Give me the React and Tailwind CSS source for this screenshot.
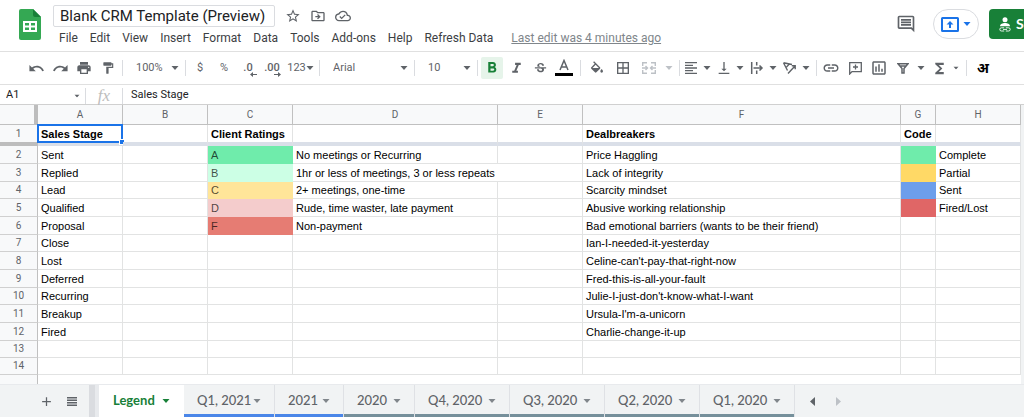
import clsx from "clsx";
import {
  MdAdd,
  MdBorderAll,
  MdFormatAlignLeft,
  MdFormatBold,
  MdFormatItalic,
  MdFormatPaint,
  MdFunctions,
  MdLink,
  MdOutlineCloudDone,
  MdOutlineComment,
  MdOutlineDriveFileMove,
  MdOutlineInsertChart,
  MdPrint,
  MdRedo,
  MdStarBorder,
  MdStrikethroughS,
  MdUndo,
  MdVerticalAlignBottom,
} from "react-icons/md";

const MENUS = ["File", "Edit", "View", "Insert", "Format", "Data", "Tools", "Add-ons", "Help", "Refresh Data"];

const COLUMNS = [
  { id: "A", width: "w-[85px]" },
  { id: "B", width: "w-[85px]" },
  { id: "C", width: "w-[85px]" },
  { id: "D", width: "w-[205px]" },
  { id: "E", width: "w-[85px]" },
  { id: "F", width: "" },
  { id: "G", width: "w-[35px]" },
  { id: "H", width: "w-[85px]" },
];

const HEADINGS = { A: "Sales Stage", C: "Client Ratings", F: "Dealbreakers", G: "Code" };

const ROWS = [
  { A: "Sent", C: "A", D: "No meetings or Recurring", F: "Price Haggling", H: "Complete" },
  { A: "Replied", C: "B", D: "1hr or less of meetings, 3 or less repeats", F: "Lack of integrity", H: "Partial" },
  { A: "Lead", C: "C", D: "2+ meetings, one-time", F: "Scarcity mindset", H: "Sent" },
  { A: "Qualified", C: "D", D: "Rude, time waster, late payment", F: "Abusive working relationship", H: "Fired/Lost" },
  { A: "Proposal", C: "F", D: "Non-payment", F: "Bad emotional barriers (wants to be their friend)" },
  { A: "Close", F: "Ian-I-needed-it-yesterday" },
  { A: "Lost", F: "Celine-can't-pay-that-right-now" },
  { A: "Deferred", F: "Fred-this-is-all-your-fault" },
  { A: "Recurring", F: "Julie-I-just-don't-know-what-I-want" },
  { A: "Breakup", F: "Ursula-I'm-a-unicorn" },
  { A: "Fired", F: "Charlie-change-it-up" },
  {},
  {},
];

const RATING_FILLS = ["bg-[#6fecab]", "bg-[#ccffe5]", "bg-[#ffe599]", "bg-[#f4cccc]", "bg-[#e67c73]"];
const CODE_FILLS = ["bg-[#6fecab]", "bg-[#ffd966]", "bg-[#6d9eeb]", "bg-[#e06666]"];

const TABS = [
  { name: "Q1, 2021", bar: "border-[#4a86e8]", width: "w-[91px]" },
  { name: "2021", bar: "border-[#4a86e8]", width: "w-[69px]" },
  { name: "2020", bar: "border-[#76909b]", width: "w-[71px]" },
  { name: "Q4, 2020", bar: "border-[#76909b]", width: "w-[95px]" },
  { name: "Q3, 2020", bar: "border-[#76909b]", width: "w-[95px]" },
  { name: "Q2, 2020", bar: "border-[#76909b]", width: "w-[95px]" },
  { name: "Q1, 2020", bar: "border-[#76909b]", width: "w-[95px]" },
];

function Caret({ className }) {
  return (
    <svg viewBox="0 0 8 4" className={clsx("h-1 w-2 shrink-0", className)} fill="currentColor" aria-hidden="true">
      <path d="M0.5 0h7L4 4z" />
    </svg>
  );
}

function Group({ className, children }) {
  return <div className={clsx("flex h-4 shrink-0 items-center border-r border-[#dadce0]", className)}>{children}</div>;
}

function Tool({ label, className = "w-6", children }) {
  return (
    <button aria-label={label} className={clsx("flex h-6 shrink-0 items-center justify-center", className)}>
      {children}
    </button>
  );
}

function MenuTool({ label, children }) {
  return (
    <Tool label={label} className="w-[33px] gap-1">
      {children}
      <Caret />
    </Tool>
  );
}

function ToolSelect({ label, value, className }) {
  return (
    <div className={clsx("relative flex items-center", className)}>
      <select
        aria-label={label}
        defaultValue={value}
        className="w-full appearance-none bg-transparent pl-[11px] text-[11px] leading-4 outline-none"
      >
        <option>{value}</option>
      </select>
      <Caret className="pointer-events-none absolute right-1" />
    </div>
  );
}

function SheetsLogo() {
  return (
    <svg viewBox="0 0 22 31" className="h-[31px] w-[22px] shrink-0" aria-hidden="true">
      <path d="M2 0h12l8 8v21a2 2 0 0 1-2 2H2a2 2 0 0 1-2-2V2a2 2 0 0 1 2-2z" fill="#34a853" />
      <path d="M14 0l8 8h-6a2 2 0 0 1-2-2z" fill="#188038" />
      <path d="M4 12h14v11H4zM6 14v2.600h4V14zM12 14v2.600h4V14zM6 18.500V21h4v-2.500zM12 18.500V21h4v-2.500z" fill="#fff" fillRule="evenodd" />
    </svg>
  );
}

function Header() {
  return (
    <header className="flex h-[52px] items-start overflow-hidden border-b border-[#e0e0e0] pl-[19px]">
      <div className="pt-[9px]">
        <SheetsLogo />
      </div>
      <div className="ml-3 shrink-0 pt-[5px]">
        <div className="flex items-center text-[#5f6368]">
          <input
            aria-label="Document name"
            defaultValue="Blank CRM Template (Preview)"
            className="h-[22px] w-[222px] rounded-xs border border-[#dadce0] px-[6px] text-[15px] leading-5 text-[#202124] outline-none"
          />
          <button aria-label="Star" className="ml-[10px]">
            <MdStarBorder size={16} />
          </button>
          <button aria-label="Move" className="ml-[9px]">
            <MdOutlineDriveFileMove size={16} />
          </button>
          <button aria-label="Saved to Drive" className="ml-[9px]">
            <MdOutlineCloudDone size={16} />
          </button>
        </div>
        <nav className="mt-[3px] flex items-center gap-3 pl-[6px] text-xs leading-4 text-[#3c4043]">
          {MENUS.map((name) => (
            <button key={name}>{name}</button>
          ))}
          <a href="#history" className="ml-[6px] text-[#80868b] underline">
            Last edit was 4 minutes ago
          </a>
        </nav>
      </div>
      <div className="-mr-[37px] ml-auto flex shrink-0 items-center pt-[9px]">
        <button aria-label="Open comment history" className="text-[#5f6368]">
          <MdOutlineComment size={20} />
        </button>
        <button
          aria-label="Present to a meeting"
          className="ml-[17px] flex h-[30px] w-[46px] items-center justify-center gap-1 rounded-full border border-[#dadce0] text-[#1a73e8]"
        >
          <svg viewBox="0 0 18 15" className="h-[15px] w-[18px]" aria-hidden="true">
            <rect x="1" y="1" width="16" height="13" rx="0.500" fill="none" stroke="currentColor" strokeWidth="2" />
            <path d="M9 4l3.500 3.500H10V11H8V7.500H5.500z" fill="currentColor" />
          </svg>
          <Caret />
        </button>
        <button className="ml-[10px] flex h-[30px] w-[72px] items-center gap-[5px] rounded-sm bg-[#188038] pl-[10px] font-['Lato',sans-serif] text-sm font-bold text-white">
          <svg viewBox="0 0 12 15" className="h-[15px] w-3 shrink-0" aria-hidden="true">
            <circle cx="6" cy="2.700" r="2.500" fill="#fff" />
            <path d="M1 9.300c0-2.200 2.600-3.300 5-3.300s5 1.100 5 3.300z" fill="#fff" />
            <path d="M5.200 10.800H2.400a1.600 1.600 0 0 0 0 3.200h2.800M6.800 10.800h2.800a1.600 1.600 0 0 1 0 3.200H6.800M4 12.400h4" fill="none" stroke="#fff" strokeWidth="0.900" />
          </svg>
          Share
        </button>
      </div>
    </header>
  );
}

function Toolbar() {
  return (
    <div className="flex h-[33px] items-center border-b border-[#e0e0e0] pl-6 text-[11px] text-[#5f6368]">
      <Group className="pr-0.5">
        <Tool label="Undo"><MdUndo size={17} /></Tool>
        <Tool label="Redo"><MdRedo size={17} /></Tool>
        <Tool label="Print"><MdPrint size={16} /></Tool>
        <Tool label="Paint format"><MdFormatPaint size={14} /></Tool>
      </Group>
      <Group className="px-0.5">
        <ToolSelect label="Zoom" value="100%" className="w-[58px]" />
      </Group>
      <Group className="px-0.5">
        <Tool label="Format as currency">$</Tool>
        <Tool label="Format as percent">%</Tool>
        <Tool label="Decrease decimal places">
          <span className="relative font-medium">
            .0
            <svg viewBox="0 0 7 5" className="absolute -right-1 -bottom-px h-[5px] w-[7px]" aria-hidden="true">
              <path d="M0 2.500L3 0v2h4v1H3v2z" fill="currentColor" />
            </svg>
          </span>
        </Tool>
        <Tool label="Increase decimal places">
          <span className="relative font-medium">
            .00
            <svg viewBox="0 0 7 5" className="absolute -right-px -bottom-px h-[5px] w-[7px]" aria-hidden="true">
              <path d="M7 2.500L4 0v2H0v1h4v2z" fill="currentColor" />
            </svg>
          </span>
        </Tool>
        <Tool label="More formats" className="w-[33px]">
          <span>123</span>
          <Caret />
        </Tool>
      </Group>
      <Group className="px-0.5">
        <ToolSelect label="Font" value="Arial" className="w-[90px]" />
      </Group>
      <Group className="px-0.5">
        <ToolSelect label="Font size" value="10" className="w-[58px]" />
      </Group>
      <Group className="pr-1 pl-0.5">
        <Tool label="Bold">
          <span className="flex h-[22px] w-[22px] items-center justify-center rounded-xs bg-[#e6f4ea] text-[#188038]">
            <MdFormatBold size={18} />
          </span>
        </Tool>
        <Tool label="Italic"><MdFormatItalic size={17} /></Tool>
        <Tool label="Strikethrough"><MdStrikethroughS size={15} /></Tool>
        <Tool label="Text color">
          <svg viewBox="0 0 18 18" className="h-[18px] w-[18px]" aria-hidden="true">
            <path d="M5 11L9 1.500 13 11M6.300 8h5.400" fill="none" stroke="currentColor" strokeWidth="1.500" />
            <path d="M0 14h18v3H0z" fill="#000" />
          </svg>
        </Tool>
      </Group>
      <Group className="gap-0.5 pl-1">
        <Tool label="Fill color">
          <svg viewBox="0 0 24 24" className="h-4 w-4" fill="currentColor" aria-hidden="true">
            <path d="M16.560 10.940L7.620 2 6.210 3.410l2.380 2.380-5.150 5.150a1.490 1.490 0 0 0 0 2.120l5.500 5.500c.290.290.680.440 1.060.440s.770-.150 1.060-.440l5.500-5.500c.590-.580.590-1.530 0-2.120zM5.210 12L10 7.210 14.790 12zM19 13.500s-2 2.170-2 3.500a2 2 0 0 0 4 0c0-1.330-2-3.500-2-3.500z" />
          </svg>
        </Tool>
        <Tool label="Borders"><MdBorderAll size={16} /></Tool>
        <Tool label="Merge cells">
          <svg viewBox="0 0 14 12" className="h-3 w-[14px] text-[#bdc1c6]" fill="none" stroke="currentColor" strokeWidth="1.400" aria-hidden="true">
            <path d="M0.700 4V0.700H5M9 0.700h4.300V4M0.700 8v3.300H5M9 11.300h4.300V8M0 6h5M14 6H9M3.500 4L5.500 6l-2 2M10.500 4l-2 2 2 2" />
          </svg>
        </Tool>
        <Tool label="Select merge type" className="w-4 pr-1 text-[#bdc1c6]"><Caret /></Tool>
      </Group>
      <Group className="pr-1">
        <MenuTool label="Horizontal align"><MdFormatAlignLeft size={16} /></MenuTool>
        <MenuTool label="Vertical align"><MdVerticalAlignBottom size={16} /></MenuTool>
        <MenuTool label="Text wrapping">
          <svg viewBox="0 0 16 14" className="h-[14px] w-4" fill="none" stroke="currentColor" strokeWidth="1.500" aria-hidden="true">
            <path d="M2.700 1v12M7.700 1v3.500M7.700 9.500V13M4.500 7H13M10.500 4.500L13 7l-2.500 2.500" />
          </svg>
        </MenuTool>
        <MenuTool label="Text rotation">
          <svg viewBox="0 0 16 14" className="h-[14px] w-4" fill="none" stroke="currentColor" strokeWidth="1.400" aria-hidden="true">
            <path d="M1.500 1.800L10 3.500M1.500 1.800L5.500 9.500M7.300 3L4 6.600M6 12.500L13 5M9.800 4.800L13.200 4.800 13.200 8.200" />
          </svg>
        </MenuTool>
      </Group>
      <Group className="pr-[5px] pl-0.5">
        <Tool label="Insert link"><MdLink size={18} /></Tool>
        <Tool label="Insert comment">
          <svg viewBox="0 0 13 13" className="h-[13px] w-[13px]" fill="none" stroke="currentColor" strokeWidth="1.300" aria-hidden="true">
            <path d="M0.700 12V0.700h11.600v8.900H3zM6.500 2.500v5M4 5h5" />
          </svg>
        </Tool>
        <Tool label="Insert chart"><MdOutlineInsertChart size={18} /></Tool>
        <Tool label="Create a filter">
          <svg viewBox="0 0 12 11" className="h-[11px] w-3" fill="none" stroke="currentColor" strokeWidth="1.500" aria-hidden="true">
            <path d="M1 0.800h10L7 5.500V10H5V5.500zM3 3h6" />
          </svg>
        </Tool>
        <Tool label="Filter views" className="w-3"><Caret /></Tool>
        <Tool label="Functions"><MdFunctions size={17} /></Tool>
        <Tool label="More functions" className="w-2.5"><Caret className="scale-75" /></Tool>
      </Group>
      <Tool label="Input tools" className="w-8">
        <span className="font-['Noto_Sans',sans-serif] text-sm font-bold text-black">अ</span>
      </Tool>
    </div>
  );
}

function FormulaBar() {
  return (
    <div className="flex h-5 items-center border-b border-[#d0d0d0] pt-0.5 text-[11px] text-[#202124]">
      <div className="relative flex w-[86px] items-center border-r border-[#dadce0]">
        <input aria-label="Name box" defaultValue="A1" className="h-4 w-full pl-[6px] outline-none" />
        <Caret className="pointer-events-none absolute right-1 scale-75 text-[#5f6368]" />
      </div>
      <div className="flex h-4 w-[37px] items-center justify-center border-r border-[#dadce0] font-['Liberation_Serif',serif] text-[17px] leading-4 text-[#bdbdbd] italic">
        fx
      </div>
      <input aria-label="Formula" defaultValue="Sales Stage" className="h-4 min-w-0 flex-1 pl-2 outline-none" />
    </div>
  );
}

function Grid() {
  return (
    <div className="flex border-b border-[#e8eaed]">
      <div className="min-w-0 flex-1">
        <table className="w-full table-fixed border-separate border-spacing-0 font-['Liberation_Sans',Arial,sans-serif] text-[11px] leading-4 text-black">
          <colgroup>
            <col className="w-[38px]" />
            {COLUMNS.map((col) => (
              <col key={col.id} className={col.width} />
            ))}
          </colgroup>
          <thead>
            <tr className="h-5 bg-[#f8f9fa] font-['Roboto',sans-serif] text-[10px] text-[#5f6368]">
              <td className="border-r-4 border-b border-r-[#bdbdbd] border-b-[#c0c0c0] p-0" />
              {COLUMNS.map((col) => (
                <th key={col.id} className="border-r border-b border-[#c0c0c0] p-0 font-normal">
                  {col.id}
                </th>
              ))}
            </tr>
          </thead>
          <tbody>
            <tr className="h-[21px]">
              <th className="border-r border-b-4 border-r-[#c0c0c0] border-b-[#bdbdbd] bg-[#f8f9fa] p-0 font-['Roboto',sans-serif] text-[10px] font-normal text-[#5f6368]">
                1
              </th>
              {COLUMNS.map((col) => (
                <td
                  key={col.id}
                  className={clsx(
                    "relative border-b-4 border-r-[#e2e3e3] border-b-[#dadfe8] p-0 pl-[3px] font-bold whitespace-nowrap",
                    "border-r"
                  )}
                >
                  {HEADINGS[col.id]}
                  {col.id === "A" && (
                    <span className="absolute -top-px -right-px -bottom-px -left-px border-2 border-[#1a73e8]">
                      <span className="absolute -right-1 -bottom-1 h-[6px] w-[6px] border border-white bg-[#1a73e8]" />
                    </span>
                  )}
                </td>
              ))}
            </tr>
            {ROWS.map((row, i) => (
              <tr key={i} className={i % 3 === 2 || i === ROWS.length - 1 ? "h-[17px]" : "h-[18px]"}>
                <th className="border-r border-b border-r-[#c0c0c0] border-b-[#d0d0d0] bg-[#f8f9fa] p-0 font-['Roboto',sans-serif] text-[10px] font-normal text-[#5f6368]">
                  {i + 2}
                </th>
                {COLUMNS.map((col) => (
                  <td
                    key={col.id}
                    className={clsx(
                      "border-b border-[#e2e3e3] p-0 pl-[3px] whitespace-nowrap",
                      // long text in D3 runs on into E
                      !(col.id === "D" && i === 1) && "border-r",
                      col.id === "C" && "text-black/70",
                      col.id === "C" && RATING_FILLS[i] && "border-transparent",
                      col.id === "C" && RATING_FILLS[i],
                      col.id === "G" && CODE_FILLS[i] && "border-transparent",
                      col.id === "G" && CODE_FILLS[i]
                    )}
                  >
                    {row[col.id]}
                  </td>
                ))}
              </tr>
            ))}
          </tbody>
        </table>
        <div className="h-[9px] w-[38px] border-r border-[#c0c0c0] bg-[#f8f9fa]" />
      </div>
      <div className="w-[3px] bg-[#f1f3f4]" />
    </div>
  );
}

function SheetTabs() {
  return (
    <footer className="flex h-8 items-stretch bg-[#f1f3f4] font-['Lato',sans-serif] text-[13px] font-medium text-[#5f6368]">
      <button aria-label="Add sheet" className="ml-[38px] flex w-4 items-center justify-center">
        <MdAdd size={15} />
      </button>
      <button aria-label="All sheets" className="ml-[13px] flex w-[10px] items-center">
        <svg viewBox="0 0 10 9" className="h-[9px] w-[10px]" fill="currentColor" aria-hidden="true">
          <path d="M0 0h10v1.500H0zM0 2.500h10V4H0zM0 5h10v1.500H0zM0 7.500h10V9H0z" />
        </svg>
      </button>
      <div className="ml-3 w-[10px] border-l-[6px] border-[#dadce0] bg-[#e8eaed]" />
      <button className="flex w-[85px] items-center justify-between bg-white pr-[14px] pl-[14px] font-bold text-[#188038]">
        Legend
        <Caret />
      </button>
      {TABS.map((tab) => (
        <button key={tab.name} className={clsx("flex flex-col border-r border-[#dfe1e5]", tab.width)}>
          <span className={clsx("flex w-full flex-1 items-center justify-between border-b-[3px] pt-[3px] pr-[13px] pl-[13px]", tab.bar)}>
            {tab.name}
            <Caret className="text-[#80868b]" />
          </span>
        </button>
      ))}
      <button aria-label="Scroll left" className="ml-3 flex w-[10px] items-center justify-center">
        <svg viewBox="0 0 5 9" className="h-[9px] w-[5px]" fill="currentColor" aria-hidden="true">
          <path d="M5 0v9L0 4.500z" />
        </svg>
      </button>
      <button aria-label="Scroll right" className="ml-4 flex w-[10px] items-center justify-center text-[#bdc1c6]">
        <svg viewBox="0 0 5 9" className="h-[9px] w-[5px]" fill="currentColor" aria-hidden="true">
          <path d="M0 0v9l5-4.500z" />
        </svg>
      </button>
    </footer>
  );
}

export default function App() {
  return (
    <div className="overflow-hidden bg-white font-['Roboto',sans-serif]">
      <Header />
      <Toolbar />
      <FormulaBar />
      <Grid />
      <SheetTabs />
    </div>
  );
}
